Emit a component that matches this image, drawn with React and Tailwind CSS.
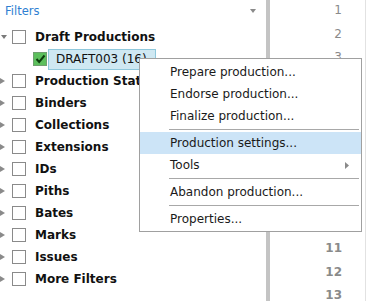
import React from "react";

const font = { fontFamily: '"DejaVu Sans", Verdana, sans-serif' };

function Tri({ down }) {
  return down ? (
    <svg width="8" height="6" viewBox="0 0 8 6" className="shrink-0">
      <path d="M1 1 L7 1 L4 5 Z" fill="#7a7a7a" />
    </svg>
  ) : (
    <svg width="8" height="8" viewBox="0 0 8 8" className="shrink-0">
      <path d="M0 1 L5 4 L0 7 Z" fill="#8a8a8a" />
    </svg>
  );
}

function Box() {
  return <div className="w-[14px] h-[14px] border border-[#8a8a8a] bg-white shrink-0" />;
}

function Row({ label, down }) {
  return (
    <div className="h-[22px] flex items-center">
      <div className="w-[12px] flex items-center">
        <Tri down={down} />
      </div>
      <Box />
      <div className="ml-[9px] text-[12px] font-bold text-[#111] whitespace-nowrap">{label}</div>
    </div>
  );
}

function Item({ label, active, sub }) {
  return (
    <div className={`h-[22px] flex items-center pl-[30px] pr-[12px] text-[12px] text-[#1a1a1a] ${active ? "bg-[#cce4f7]" : ""}`}>
      <span className="flex-1 whitespace-nowrap">{label}</span>
      {sub && (
        <svg width="4" height="7" viewBox="0 0 4 7">
          <path d="M0 0 L4 3.5 L0 7 Z" fill="#8a8a8a" />
        </svg>
      )}
    </div>
  );
}

function Sep() {
  return (
    <div className="h-[5px] flex items-center pl-[29px] pr-[2px]">
      <div className="h-px w-full bg-[#a8a8a8]" />
    </div>
  );
}

export default function App() {
  const rows = ["Production Stat", "Binders", "Collections", "Extensions", "IDs", "Piths", "Bates", "Marks", "Issues", "More Filters"];
  return (
    <div className="w-[378px] h-[301px] relative overflow-hidden bg-white flex" style={font}>
      <div className="w-[266px] shrink-0 overflow-hidden">
        <div className="h-[26px] flex items-center pl-[5px] pr-[10px]">
          <span className="text-[11.5px] text-[#2f7fd2] flex-1 -mt-[3px]">Filters</span>
          <svg width="6" height="4" viewBox="0 0 6 4" className="-mt-[5px]">
            <path d="M0 0 L6 0 L3 4 Z" fill="#8a8a8a" />
          </svg>
        </div>
        <Row label="Draft Productions" down />
        <div className="h-[22px] flex items-center pl-[33px]">
          <div className="w-[14px] h-[14px] border border-[#6f9f6f] bg-[#5cbf5c] flex items-center justify-center shrink-0">
            <svg width="11" height="10" viewBox="0 0 11 10">
              <path d="M1.5 5 L4.2 8 L9.5 1.5" stroke="#0d3d0d" strokeWidth="2" fill="none" />
            </svg>
          </div>
          <div className="ml-[1px] h-[21px] w-[108px] border border-[#8fc8dc] bg-[#cfe8f2] flex items-center pl-[7px] text-[12px] text-[#111] whitespace-nowrap">
            DRAFT003 (16)
          </div>
        </div>
        {rows.map((r) => (
          <Row key={r} label={r} />
        ))}
      </div>
      <div className="w-[4px] shrink-0 bg-[#c4c4c4]" />
      <div className="w-[95px] shrink-0 flex flex-col items-end pr-[23px] text-[12px] text-[#8a8a8a]">
        {[1, 2, 3, 4, 5, 6, 7, 8, 9, 10, 11, 12, 13].map((n) => (
          <div key={n} className={`h-[23.8px] shrink-0 flex items-center ${n > 10 ? "font-bold" : ""}`} style={n === 1 ? { marginTop: "-2px" } : undefined}>
            {n}
          </div>
        ))}
      </div>
      <div className="w-px shrink-0 bg-[#e2e2e2]" />
      <div className="flex-1" />

      <div className="absolute left-[139px] top-[58px] w-[223px] bg-white border border-[#a0a0a0] pt-[2px] pb-[1px]">
        <Item label="Prepare production..." />
        <Item label="Endorse production..." />
        <Item label="Finalize production..." />
        <Sep />
        <Item label="Production settings..." active />
        <Item label="Tools" sub />
        <Sep />
        <Item label="Abandon production..." />
        <Sep />
        <Item label="Properties..." />
      </div>
    </div>
  );
}
